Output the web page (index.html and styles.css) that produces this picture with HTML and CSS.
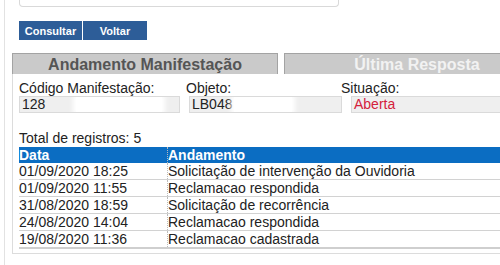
FILE: index.html
```html
<!DOCTYPE html>
<html lang="pt-BR">
<head>
  <meta charset="UTF-8" />
  <title>Andamento Manifestação</title>
  <link rel="stylesheet" href="styles.css">
</head>
<body>
  <div class="page">
    <div class="top-box"></div>

    <div class="buttons">
      <button class="btn btn-consultar">Consultar</button>
      <button class="btn btn-voltar">Voltar</button>
    </div>

    <div class="tabs">
      <div class="tab active">Andamento Manifestação</div>
      <div class="tab">Última Resposta</div>
    </div>

    <div class="panel">
      <div class="fields">
        <div class="field f-codigo">
          <label>Código Manifestação:</label>
          <div class="input">128<span class="hide hide-a"></span></div>
        </div>
        <div class="field f-objeto">
          <label>Objeto:</label>
          <div class="input">LB048<span class="hide hide-b"></span></div>
        </div>
        <div class="field f-situacao">
          <label>Situação:</label>
          <div class="input red">Aberta</div>
        </div>
      </div>

      <div class="total">Total de registros: 5</div>

      <table class="grid">
        <thead>
          <tr><th class="col-data">Data</th><th>Andamento</th></tr>
        </thead>
        <tbody>
          <tr><td>01/09/2020 18:25</td><td>Solicitação de intervenção da Ouvidoria</td></tr>
          <tr><td>01/09/2020 11:55</td><td>Reclamacao respondida</td></tr>
          <tr><td>31/08/2020 18:59</td><td>Solicitação de recorrência</td></tr>
          <tr><td>24/08/2020 14:04</td><td>Reclamacao respondida</td></tr>
          <tr><td>19/08/2020 11:36</td><td>Reclamacao cadastrada</td></tr>
        </tbody>
      </table>
    </div>
  </div>
</body>
</html>
```

FILE: styles.css
```css
body {
  margin: 0;
  background: #fff;
  font-family: 'Liberation Sans', Arial, sans-serif;
  color: #222;
  overflow: hidden;
}

.page {
  margin-left: 4px;
  border-left: 1px solid #e2e2e2;
  height: 265px;
  overflow: hidden;
}

.top-box {
  margin-left: 14px;
  width: 318px;
  height: 6px;
  border: 1px solid #d9d9d9;
  border-top: none;
  border-radius: 0 0 4px 4px;
}

.buttons {
  display: flex;
  gap: 1px;
  margin: 14px 0 0 14px;
}

.btn {
  height: 19px;
  border: none;
  padding: 0;
  background: #2d5d98;
  color: #fff;
  font-family: 'Liberation Sans', Arial, sans-serif;
  font-weight: bold;
  font-size: 11px;
}

.btn-consultar { width: 63px; }
.btn-voltar { width: 64px; }

.tabs {
  display: flex;
  gap: 6px;
  margin: 13px 0 0 7px;
}

.tab {
  flex: 0 0 264px;
  height: 20px;
  line-height: 21px;
  background: #cacaca;
  border: 1px solid #a3a3a3;
  border-bottom: none;
  text-align: center;
  font-weight: bold;
  font-size: 16px;
  color: #f2f2f2;
  white-space: nowrap;
}

.tab.active {
  color: #555;
}

.panel {
  margin-left: 7px;
  border-left: 1px solid #dcdcdc;
  border-bottom: 1px solid #dcdcdc;
  height: 179px;
  padding-left: 6px;
}

.fields {
  display: flex;
  padding-top: 6px;
  font-size: 14px;
}

.field {
  flex: none;
}

.field label {
  display: block;
  height: 16px;
  line-height: 16px;
}

.input {
  position: relative;
  height: 15px;
  line-height: 15px;
  background: #efefef;
  border: 1px solid #dadada;
  padding-left: 2px;
  overflow: hidden;
  white-space: nowrap;
}

.input.red { color: #d4213c; }

.hide {
  position: absolute;
  top: 0;
  bottom: 0;
  background: #fff;
  box-shadow: 0 0 5px 3px #fff;
}

.hide-a { left: 56px; width: 86px; }
.hide-b { left: 44px; width: 58px; }

.f-codigo { width: 160px; }
.f-codigo .input { width: 157px; }

.f-objeto { margin-left: 7px; width: 155px; }
.f-objeto .input { margin-left: 3px; width: 149px; }

.f-situacao { width: 200px; }
.f-situacao .input { margin-left: 10px; width: 190px; }

.total {
  margin-top: 17px;
  font-size: 14px;
  height: 17px;
  line-height: 17px;
}

.grid {
  border-collapse: collapse;
  width: 100%;
  font-size: 14px;
  border-bottom: 2px solid #cfcfcf;
}

.grid th {
  background: #0b6dc2;
  color: #fff;
  font-weight: bold;
  text-align: left;
  height: 16px;
  line-height: 16px;
  padding: 0;
}

.grid th + th,
.grid td + td {
  border-left: 1px dotted #bbb;
}

.grid td {
  height: 16px;
  line-height: 16px;
  padding: 0;
  border-bottom: 1px solid #d2d2d2;
}

.col-data { width: 148px; }
```
